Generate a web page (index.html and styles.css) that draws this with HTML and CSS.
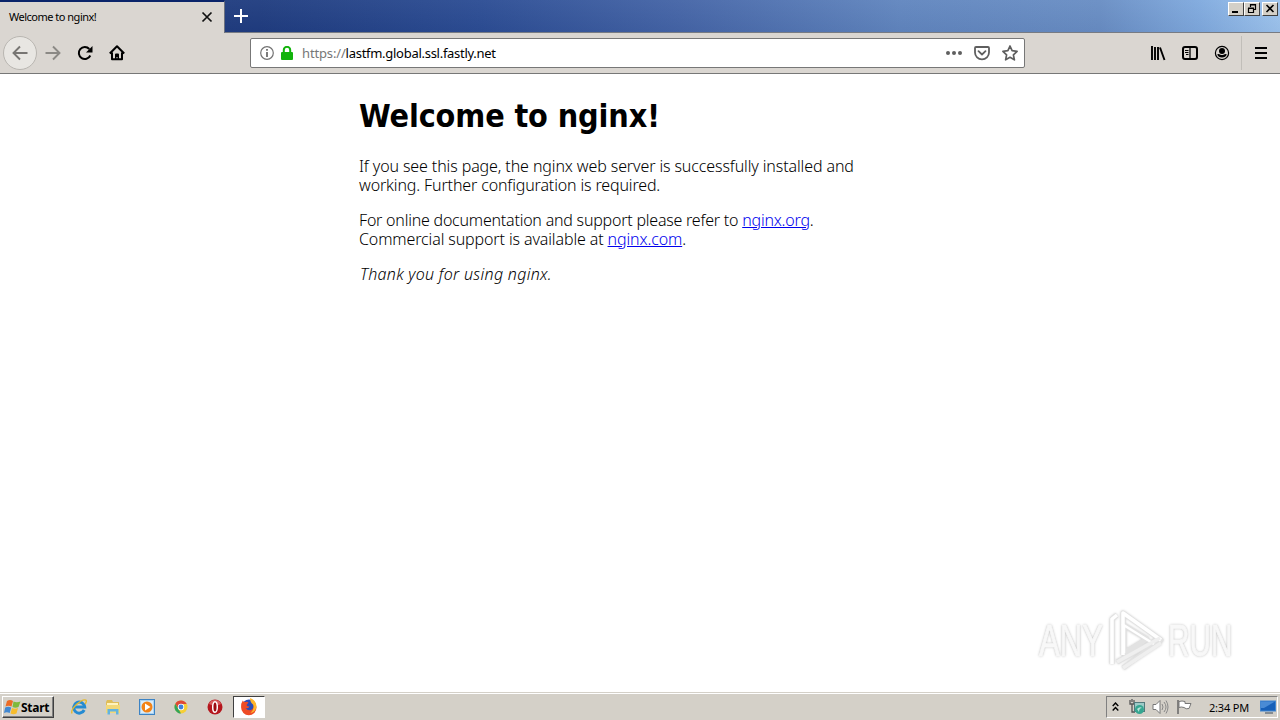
FILE: index.html
```html
<!DOCTYPE html>
<html lang="en">
<head>
<meta charset="UTF-8">
<title>Welcome to nginx!</title>
<link rel="stylesheet" href="styles.css">
</head>
<body>
<!-- Tab strip -->
<header class="titlebar">
    <div class="tab">
        <span class="tab-title">Welcome to nginx!</span>
        <svg class="tab-close" width="12" height="12" viewBox="0 0 12 12"><path d="M1.500 1.500l9 9M10.500 1.500l-9 9" fill="none" stroke="#111" stroke-width="1.700"/></svg>
    </div>
    <svg class="new-tab" width="14" height="14" viewBox="0 0 14 14"><path d="M7 0v14M0 7h14" stroke="#fff" stroke-width="2"/></svg>
    <div class="window-buttons">
        <span class="win-btn"><svg width="14" height="12" viewBox="0 0 14 12"><path d="M3 9h6" stroke="#000" stroke-width="2"/></svg></span>
        <span class="win-btn"><svg width="14" height="12" viewBox="0 0 14 12"><path d="M5.500 4V1.500h5v5H9M5 2h6M3.500 5.500h5v4h-5zM3 5h6" fill="none" stroke="#000" stroke-width="1.200"/></svg></span>
        <span class="win-btn close"><svg width="14" height="12" viewBox="0 0 14 12"><path d="M3.500 2l7 7M10.500 2l-7 7" stroke="#000" stroke-width="1.600"/></svg></span>
    </div>
</header>

<!-- Navigation toolbar -->
<nav class="toolbar">
    <div class="nav-buttons">
        <span class="back"><svg width="16" height="16" viewBox="0 0 16 16"><path d="M15.500 8H1.500M8 1.500L1.500 8 8 14.500" fill="none" stroke="#777572" stroke-width="1.900"/></svg></span>
        <svg width="16" height="16" viewBox="0 0 16 16"><path d="M.5 8h14M8 1.500L14.500 8 8 14.500" fill="none" stroke="#8b8985" stroke-width="1.900"/></svg>
        <svg width="16" height="16" viewBox="0 0 16 16"><path d="M13.300 10.500A6 6 0 1 1 12.300 4" fill="none" stroke="#000" stroke-width="2"/><path d="M15.500 1v6.500H9z"/></svg>
        <svg width="16" height="16" viewBox="0 0 16 16"><path d="M.8 8.500L8 1.300l7.200 7.200M3 7.500v6.700h10V7.500" fill="none" stroke="#000" stroke-width="2" stroke-linejoin="round"/><path d="M6 14V9.500q0-1 1-1h2q1 0 1 1V14H8.500v-2h-1v2z"/></svg>
    </div>
    <div class="urlbar">
        <svg class="info" width="14" height="14" viewBox="0 0 14 14"><circle cx="7" cy="7" r="6.300" fill="none" stroke="#737373" stroke-width="1.200"/><path d="M7 3v1.800M7 6v5" stroke="#656565" stroke-width="1.700"/></svg>
        <svg class="lock" width="12" height="14" viewBox="0 0 12 14"><path d="M2.800 7V4a3.200 3.200 0 0 1 6.400 0v3" fill="none" stroke="#12b30b" stroke-width="2"/><rect y="6" width="12" height="8" rx="1" fill="#12b30b"/></svg>
        <span class="url"><span class="scheme">https://</span>lastfm.global.ssl.fastly.net</span>
        <svg class="dots" width="16" height="16" viewBox="0 0 16 16" fill="#5f5f5f"><circle cx="2" cy="8" r="2"/><circle cx="8" cy="8" r="2"/><circle cx="14" cy="8" r="2"/></svg>
        <svg width="16" height="16" viewBox="0 0 16 16" fill="none" stroke="#5f5f5f" stroke-width="1.800"><path d="M2 2h12q1 0 1 1v4.500a7 6.800 0 0 1-14 0V3q0-1 1-1z"/><path d="M4.500 6.200L8 9.500l3.500-3.300" stroke-linecap="round" stroke-linejoin="round"/></svg>
        <svg width="16" height="16" viewBox="0 0 16 16"><path d="M8 1l2.100 4.700 5 .6-3.700 3.500 1 5L8 12.300l-4.400 2.500 1-5L.9 6.300l5-.6z" fill="none" stroke="#5f5f5f" stroke-width="1.700" stroke-linejoin="round"/></svg>
    </div>
    <div class="tools">
        <svg width="16" height="16" viewBox="0 0 16 16"><path d="M2 1v14M5 2v13M8 2v13M10 2.500l4.500 12.500" fill="none" stroke="#000" stroke-width="1.900"/></svg>
        <svg width="16" height="16" viewBox="0 0 16 16"><rect x="1" y="2" width="14" height="12" rx="2" fill="none" stroke="#000" stroke-width="2"/><path d="M8 2v12" stroke="#000" stroke-width="1.300"/><path d="M3 5.500h3.500M3 7.500h3.500M4 9.500h2.500" stroke="#000"/></svg>
        <svg width="16" height="16" viewBox="0 0 16 16"><circle cx="8" cy="8" r="6.600" fill="none" stroke="#000" stroke-width="1.200"/><circle cx="8" cy="6" r="3"/><path d="M3.200 9.200Q5 8.500 6 9.500q2 1 4 0 1-1 2.800-.3A5 4.500 0 0 1 3.200 9.200z"/></svg>
    </div>
    <div class="menu">
        <svg width="12" height="12" viewBox="0 0 12 12"><path d="M0 1h12M0 6h12M0 11h12" stroke="#000" stroke-width="2"/></svg>
    </div>
</nav>

<main class="page">
    <div class="content">
        <h1>Welcome to nginx!</h1>
        <p><span class="line-a">If you see this page, the nginx web server is successfully installed and</span><br>
        <span class="line-b">working. Further configuration is required.</span></p>
        <p><span class="line-c">For online documentation and support please refer to <a href="#">nginx.org</a>.</span><br>
        <span class="line-d">Commercial support is available at <a href="#">nginx.com</a>.</span></p>
        <p><em>Thank you for using nginx.</em></p>
    </div>
    <div class="watermark">
        <span class="any">ANY</span>
        <svg width="60" height="66" viewBox="0 0 60 66" fill="none" stroke-linejoin="round">
            <path d="M6 56V11l5-4M17 47V5l38 27-38 28M18 17v28l23-14-25-15M11 54l43-24" stroke="#e2e2e2" stroke-width="5"/>
            <path d="M6 56V11l5-4M17 47V5l38 27" stroke="#fff" stroke-width="3.500"/>
            <path d="M18 17v28M16 16l32 20" stroke="#fff" stroke-width="2.500"/>
            <path d="M11 54l43-24M17 60l38-25" stroke="#efefef" stroke-width="3.500"/>
        </svg>
        <span class="run">RUN</span>
    </div>
</main>

<footer class="taskbar">
    <div class="start">
        <svg width="17" height="16" viewBox="0 0 17 16"><path d="M3 2q3-2 6 0L7.500 7.500q-3-1.500-6 0z" fill="#ed6b25"/><path d="M9.500 2.500q3 1.500 7 0L14.500 8q-3 1.500-6 0z" fill="#7fb93c"/><path d="M1.200 8.500q3-1.500 6 0L5.700 14q-3-1.500-5.700 0z" fill="#4288d1"/><path d="M8 9q3 1.500 6 0l-1.500 5.500q-3 1.500-6 0z" fill="#f7bd2d"/></svg>
        <span>Start</span>
    </div>
    <div class="launchers">
        <span class="launcher"><svg width="16" height="16" viewBox="0 0 16 16"><path d="M13.200 11A5.500 5.500 0 1 1 13.700 8H4" fill="none" stroke="#258bd2" stroke-width="3"/><path d="M1 14.500C-1 10 11-1 15 1.200q1 1-1 4" fill="none" stroke="#e5b92d" stroke-width="1.400"/></svg></span>
        <span class="launcher"><svg width="16" height="16" viewBox="0 0 16 16"><path d="M1 3l1-2h5l1 2h6v11H1z" fill="#dfbd58"/><path d="M2 4h11v3H2z" fill="#fff3bd"/><path d="M1 6h14v8H1z" fill="#f2d878"/><path d="M2.500 15.500V10h11v5.500h-2.500v-3H5v3z" fill="#62b3df"/></svg></span>
        <span class="launcher"><svg width="16" height="16" viewBox="0 0 16 16"><rect x=".5" y=".5" width="15" height="15" fill="#a9d2f2" stroke="#3c83c4"/><rect x="2" y="2" width="12" height="12" fill="#d9ecfa"/><circle cx="8" cy="8" r="5.500" fill="#f38316"/><path d="M6 4.500L11.500 8 6 11.500z" fill="#fff"/></svg></span>
        <span class="launcher"><svg width="16" height="16" viewBox="0 0 16 16"><circle cx="8" cy="8" r="6.500" fill="#f6cf35"/><path d="M2.300 4.800A6.500 6.500 0 0 1 13.700 5H8l-3 4z" fill="#df4937"/><path d="M2.300 4.800L6 11l2 3.500A6.500 6.500 0 0 1 2.300 4.800z" fill="#34a45a"/><circle cx="8" cy="8" r="3.200" fill="#fff"/><circle cx="8" cy="8" r="2.400" fill="#3f80dc"/></svg></span>
        <span class="launcher"><svg width="16" height="16" viewBox="0 0 16 16"><circle cx="8" cy="8" r="7.500" fill="#b5161d"/><path d="M2 5a6.500 6.500 0 0 1 12 0q-6 3-12 0z" fill="#d95b5d"/><ellipse cx="8" cy="8" rx="2.300" ry="5.300" fill="#9d0b11" stroke="#fff" stroke-width="1.500"/></svg></span>
        <span class="launcher active"><svg width="18" height="18" viewBox="0 0 18 18"><circle cx="9" cy="8.500" r="7" fill="#284cba"/><path d="M1.500 5q1-1 1-2.500 1 1.500 3 1.500 2-.5 3 .5L6.500 7q.5 1.500 3 1.500-1 2.500-4 1.500 3 4 7 1 3-4-1-8.500 5 2 5 7a7.700 7.700 0 0 1-15.400 0Q1 6.500 1.500 5z" fill="#ee4b25"/><path d="M10 0q7 3 6.500 9-1 5-6 6 4.500-4 2.500-8.500Q10 4 10 0z" fill="#ffb52a"/></svg></span>
    </div>
    <div class="tray">
        <svg class="chevrons" width="7" height="10" viewBox="0 0 7 10"><path d="M.7 4l2.800-3 2.800 3M.7 8.500l2.800-3 2.800 3" fill="none" stroke="#000" stroke-width="1.400"/></svg>
        <svg class="network" width="16" height="16" viewBox="0 0 16 16"><path d="M1 1v4h4V1M3 5v8h3M3 0v3" fill="none" stroke="#555" stroke-width="1.300"/><rect x="5.500" y="3.500" width="10" height="9" fill="#9ccbc7" stroke="#52797c"/><circle cx="10.500" cy="10.500" r="4.500" fill="#35a690"/><path d="M8 10q3-3 5-1-3 0-3 4z" fill="#b9e4d9"/></svg>
        <svg class="sound" width="17" height="16" viewBox="0 0 17 16"><path d="M1 5.500h3l4-4v13l-4-4H1z" fill="#fff" stroke="#777"/><path d="M10 5q2 3 0 6M12 3q4 5 0 10M14 1.500q4 6.500 0 13" fill="none" stroke="#888"/></svg>
        <svg class="flag" width="17" height="16" viewBox="0 0 17 16"><path d="M2 1v14" stroke="#666" stroke-width="1.500"/><path d="M3 2.500q3-1 6 0v2h6L13 9.500q-3 1-5-1-3-1-5 0z" fill="#fff" stroke="#777"/></svg>
        <span class="clock">2:34 PM</span>
        <svg class="desktop" width="16" height="14" viewBox="0 0 16 14"><rect x=".5" y="1" width="15" height="10" fill="#1760b8" stroke="#4386cf"/><path d="M1 1.500h14L4 8H1z" fill="#498bd5"/><path d="M5 13h8" stroke="#6b7680" stroke-width="1.500"/></svg>
    </div>
</footer>
</body>
</html>
```

FILE: styles.css
```css
* {
    box-sizing: border-box;
}
body {
    margin: 0;
    width: 1280px;
    height: 720px;
    display: flex;
    flex-direction: column;
    overflow: hidden;
    background: #fff;
    font-family: "Noto Sans", "Open Sans", sans-serif;
    color: #000;
}
svg {
    display: block;
    flex: none;
}

/* tab strip */
.titlebar {
    height: 33px;
    display: flex;
    background:
        linear-gradient(rgba(255, 255, 255, 0.04), rgba(0, 0, 40, 0.04)),
        linear-gradient(90deg, #203b7e 0, #203d80 260px, #2c4d94 480px, #4565a7 680px, #6186bf 900px, #698ec4 1100px, #80aade 1200px, #9dc4ee 1280px);
    border-bottom: 1px solid #777b83;
}
.tab {
    width: 225px;
    height: 33px;
    display: flex;
    align-items: center;
    justify-content: space-between;
    padding: 0 11px 1px 9px;
    background: #dad6d1;
    border-top: 2px solid #0a246a;
    border-right: 1px solid #6d727f;
}
.tab-title {
    font-size: 11px;
    line-height: 14px;
    letter-spacing: -0.5px;
}
.new-tab {
    margin: 9px 0 0 9px;
}
.window-buttons {
    display: flex;
    margin: 2px 2px 0 auto;
}
.win-btn {
    width: 16px;
    height: 14px;
    background: #d4d0c8;
    border: 1px solid;
    border-color: #fff #404040 #404040 #fff;
}
.win-btn.close {
    margin-left: 2px;
}

/* toolbar */
.toolbar {
    height: 41px;
    display: flex;
    align-items: center;
    background: #dad6d1;
    border-bottom: 1px solid #777;
}
.nav-buttons {
    display: flex;
    align-items: center;
    gap: 16px;
    width: 250px;
    padding-left: 3px;
}
.back {
    width: 34px;
    height: 34px;
    display: flex;
    align-items: center;
    justify-content: center;
    margin-right: -8px;
    border: 1px solid #b9b6b1;
    border-radius: 50%;
    background: #e8e6e2;
}
.urlbar {
    width: 775px;
    height: 30px;
    display: flex;
    align-items: center;
    gap: 12px;
    padding: 0 6px 0 9px;
    background: #fff;
    border: 1px solid #777;
    border-radius: 2px;
}
.lock {
    margin-left: -5px;
}
.url {
    flex: 1;
    font-size: 13px;
    letter-spacing: -0.28px;
    margin-left: -3px;
    white-space: nowrap;
}
.scheme {
    color: #777;
    letter-spacing: -0.15px;
}
.tools {
    display: flex;
    gap: 16px;
    margin-left: 125px;
}
.menu {
    height: 34px;
    display: flex;
    align-items: center;
    margin-left: 11px;
    padding-left: 13px;
    border-left: 1px solid #c1beb9;
}

/* page */
.page {
    position: relative;
    height: 618px;
}
.content {
    width: 562px;
    margin: 0 auto;
    font-size: 16px;
    line-height: 19px;
    white-space: nowrap;
}
h1 {
    margin: 23px 0 21px;
    font-family: "DejaVu Sans Condensed", "DejaVu Sans", sans-serif;
    font-size: 32px;
    line-height: 39px;
    font-weight: bold;
    letter-spacing: -0.12px;
}
p {
    margin: 0 0 16px;
}
.content p {
    font-weight: 300;
}
.line-a {
    letter-spacing: -0.11px;
}
.line-b {
    letter-spacing: -0.14px;
}
.line-c {
    letter-spacing: -0.22px;
}
.line-d {
    letter-spacing: -0.12px;
}
em {
    padding-left: 1px;
    letter-spacing: 0.3px;
}
a {
    color: #0000ee;
}
.watermark {
    position: absolute;
    left: 1039px;
    top: 534px;
    height: 66px;
    display: flex;
    align-items: center;
    font-family: "Liberation Sans", sans-serif;
    font-size: 45px;
    color: #f8f8f8;
    text-shadow: 0 0 3px #999;
}
.watermark svg {
    filter: drop-shadow(0 0 1px #ccc);
}
.any,
.run {
    width: 67px;
    transform: scaleX(0.69);
    transform-origin: left;
    -webkit-text-stroke: 1px #f8f8f8;
}
.run {
    margin-left: 2px;
    transform: scaleX(0.66);
}

/* taskbar */
.taskbar {
    height: 28px;
    display: flex;
    align-items: center;
    padding: 1px 0 0 2px;
    background: #d4d0c8;
    border-top: 1px solid #d4d0c8;
    box-shadow: inset 0 1px #fff;
}
.start {
    width: 52px;
    height: 22px;
    display: flex;
    align-items: center;
    padding-left: 1px;
    border: 1px solid;
    border-color: #fff #404040 #404040 #fff;
    box-shadow: inset -1px -1px #808080;
    font-size: 12px;
    letter-spacing: -0.25px;
    font-weight: bold;
}
.launchers {
    display: flex;
    margin-left: 9px;
    gap: 2px;
}
.launcher {
    width: 32px;
    height: 22px;
    display: flex;
    align-items: center;
    justify-content: center;
}
.launcher.active {
    background: #fff;
    border: 1px solid;
    border-color: #404040 #fff #fff #404040;
}
.tray {
    width: 172px;
    height: 22px;
    display: flex;
    align-items: center;
    margin: 0 2px 0 auto;
    padding-left: 5px;
    border: 1px solid;
    border-color: #808080 #fff #fff #808080;
}
.network {
    margin-left: 10px;
}
.sound,
.flag {
    margin-left: 7px;
}
.clock {
    width: 42px;
    margin-left: 16px;
    font-size: 11px;
    letter-spacing: -0.2px;
    white-space: nowrap;
}
.desktop {
    margin-left: 9px;
}
```
